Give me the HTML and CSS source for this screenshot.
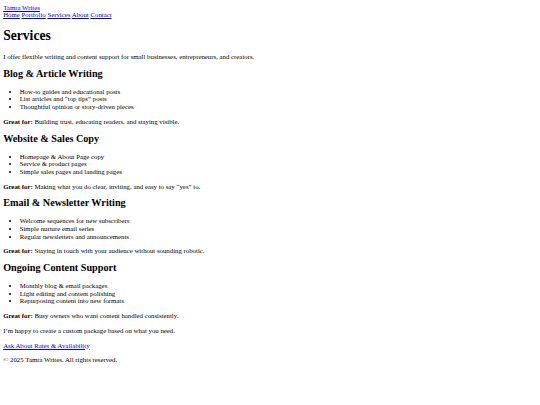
FILE: index.html
```
<!DOCTYPE html>
<html lang="en">
<head>
<meta charset="utf-8">
<title>Services - Tamra Writes</title>
<link rel="stylesheet" href="styles.css">
</head>
<body class="page">
<header class="site-header">
  <a class="brand" href="#">Tamra Writes</a>
  <nav class="site-nav">
    <a href="#">Home</a>
    <a href="#">Portfolio</a>
    <a href="#">Services</a>
    <a href="#">About</a>
    <a href="#">Contact</a>
  </nav>
</header>
<main class="content">
  <h1 class="title">Services</h1>
  <p class="text">I offer flexible writing and content support for small businesses, entrepreneurs, and creators.</p>

  <section class="service">
    <h2 class="service-title">Blog &amp; Article Writing</h2>
    <ul class="list">
      <li>How-to guides and educational posts</li>
      <li>List articles and “top tips” posts</li>
      <li>Thoughtful opinion or story-driven pieces</li>
    </ul>
    <p class="text"><strong>Great for:</strong> Building trust, educating readers, and staying visible.</p>
  </section>

  <section class="service">
    <h2 class="service-title">Website &amp; Sales Copy</h2>
    <ul class="list">
      <li>Homepage &amp; About Page copy</li>
      <li>Service &amp; product pages</li>
      <li>Simple sales pages and landing pages</li>
    </ul>
    <p class="text"><strong>Great for:</strong> Making what you do clear, inviting, and easy to say “yes” to.</p>
  </section>

  <section class="service">
    <h2 class="service-title">Email &amp; Newsletter Writing</h2>
    <ul class="list">
      <li>Welcome sequences for new subscribers</li>
      <li>Simple nurture email series</li>
      <li>Regular newsletters and announcements</li>
    </ul>
    <p class="text"><strong>Great for:</strong> Staying in touch with your audience without sounding robotic.</p>
  </section>

  <section class="service">
    <h2 class="service-title">Ongoing Content Support</h2>
    <ul class="list">
      <li>Monthly blog &amp; email packages</li>
      <li>Light editing and content polishing</li>
      <li>Repurposing content into new formats</li>
    </ul>
    <p class="text"><strong>Great for:</strong> Busy owners who want content handled consistently.</p>
  </section>

  <p class="text">I’m happy to create a custom package based on what you need.</p>
  <p class="text"><a href="#">Ask About Rates &amp; Availability</a></p>
</main>
<footer class="site-footer">
  <p class="text">© 2025 Tamra Writes. All rights reserved.</p>
</footer>
</body>
</html>
```
FILE: styles.css
```
html {
  background: #fff;
}
.page {
  margin: 3.8px 3.2px 3.2px;
  font-family: "Liberation Serif", "Times New Roman", serif;
  font-size: 6.8px;
  line-height: 7.6px;
  color: #000;
}
.page a {
  color: #0000ee;
  text-decoration: underline;
}
.site-header,
.site-nav,
.brand {
  display: block;
}
.title {
  font-size: 13.6px;
  font-weight: bold;
  line-height: 14.4px;
  margin: 10px 0 9.7px;
}
.service-title {
  font-size: 10.2px;
  font-weight: bold;
  line-height: 10.8px;
  margin: 8.2px 0;
}
.text {
  margin: 7.2px 0;
}
.list {
  margin: 7.2px 0;
  padding-left: 16.5px;
  list-style: disc;
}
```
